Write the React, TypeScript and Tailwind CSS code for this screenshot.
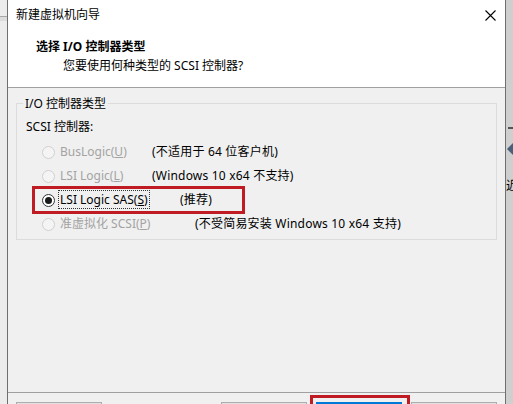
import React from 'react'

const uiFont = {
  fontFamily: '"Noto Sans", "Noto Sans CJK SC", sans-serif',
}

type Option = {
  label: string
  mnemonic: string
  note: string
  labelWidth: string
  disabled: boolean
  checked: boolean
}

const options: Option[] = [
  { label: 'BusLogic(', mnemonic: 'U', note: '(不适用于 64 位客户机)', labelWidth: 'w-[93px]', disabled: true, checked: false },
  { label: 'LSI Logic(', mnemonic: 'L', note: '(Windows 10 x64 不支持)', labelWidth: 'w-[93px]', disabled: true, checked: false },
  { label: 'LSI Logic SAS(', mnemonic: 'S', note: '(推荐)', labelWidth: 'w-[121px]', disabled: false, checked: true },
  { label: '准虚拟化 SCSI(', mnemonic: 'P', note: '(不受简易安装 Windows 10 x64 支持)', labelWidth: 'w-[136px]', disabled: true, checked: false },
]

function Radio({ checked, disabled }: { checked: boolean; disabled: boolean }) {
  return (
    <span
      className={`flex h-[13px] w-[13px] shrink-0 items-center justify-center rounded-full border ${
        disabled ? 'border-[#d0d0d0] bg-[#f4f4f4]' : 'border-[#333333] bg-white'
      }`}
    >
      {checked && <span className="h-[7px] w-[7px] rounded-full bg-[#1a1a1a]" />}
    </span>
  )
}

function OptionRow({ opt }: { opt: Option }) {
  return (
    <div className="flex h-[24px] items-center">
      <Radio checked={opt.checked} disabled={opt.disabled} />
      <span className={`ml-[4px] ${opt.labelWidth} shrink-0 whitespace-nowrap text-[12px]`}>
        <span
          className={`px-[1px] ${opt.disabled ? 'text-[#a3a3a3]' : 'text-black outline-1 outline-dotted outline-[#333]'}`}
        >
          {opt.label}
          <span className="underline">{opt.mnemonic}</span>)
        </span>
      </span>
      <span className="whitespace-nowrap text-[12px] tracking-[0.2px] text-black">{opt.note}</span>
    </div>
  )
}

export default function App() {
  return (
    <div className="relative flex h-[404px] w-[513px] overflow-hidden bg-[#e9e9e9]" style={uiFont}>
      {/* window behind, left side */}
      <div className="flex w-[7px] shrink-0 flex-col bg-[#ececec]">
        <div className="mt-[16px] h-[1px] bg-[#a8a8a8]" />
        <div className="h-[4px] bg-[#dcdcdc]" />
      </div>

      {/* wizard dialog */}
      <div className="flex w-[499px] shrink-0 flex-col border-x border-[#6f6f6f] bg-[#f0f0f0]">
        <div className="h-[87px] bg-white">
          <div className="flex h-[30px] items-center justify-between pl-[8px] pr-[9px]">
            <span className="text-[12px] text-black">新建虚拟机向导</span>
            <svg width="11" height="11" viewBox="0 0 11 11" className="text-black">
              <path d="M0.5 0.5 L10.5 10.5 M10.5 0.5 L0.5 10.5" stroke="currentColor" strokeWidth="1.1" />
            </svg>
          </div>
          <div className="pl-[28px] pt-[9px]">
            <div className="text-[12px] font-bold leading-[16px] text-black">选择 I/O 控制器类型</div>
            <div className="mt-[3px] pl-[27px] text-[12px] leading-[16px] text-black">
              您要使用何种类型的 SCSI 控制器?
            </div>
          </div>
        </div>
        <div className="h-[1px] bg-[#a0a0a0]" />

        <div className="flex-1 px-[8px] pt-[15px]">
          <div className="relative h-[137px] border border-[#dcdcdc] pl-[9px] pt-[15px]">
            <span className="absolute left-[6px] top-[-8px] bg-[#f0f0f0] px-[2px] text-[12px] leading-[16px] text-black">
              I/O 控制器类型
            </span>
            <div className="text-[12px] leading-[16px] text-black">SCSI 控制器:</div>
            <div className="mt-[5px] pl-[16px]">
              {options.map((o) => (
                <OptionRow key={o.label} opt={o} />
              ))}
            </div>
          </div>
        </div>

        <div className="h-[1px] bg-[#a0a0a0]" />
        <div className="flex h-[11px] pl-[8px] pt-[9px]">
          <div className="h-[20px] w-[86px] border border-[#adadad] bg-[#e1e1e1]" />
          <div className="ml-[119px] h-[20px] w-[86px] border border-[#adadad] bg-[#e1e1e1]" />
          <div className="ml-[9px] h-[20px] w-[86px] border-2 border-[#0078d7] bg-[#e1e1e1]" />
          <div className="ml-[9px] h-[20px] w-[86px] border border-[#adadad] bg-[#e1e1e1]" />
        </div>
      </div>

      {/* window behind, right side */}
      <div className="flex w-[7px] shrink-0 flex-col bg-[#cfcfcf]">
        <div className="mt-[127px] ml-[2px] h-[2px] bg-[#555]" />
        <svg width="7" height="12" viewBox="0 0 7 12" className="mt-[14px]">
          <path d="M7 0 L1 6 L7 12 Z" fill="#4a5f78" />
        </svg>
        <span className="mt-[24px] whitespace-nowrap text-[12px] leading-[14px] text-black">近</span>
      </div>

      {/* highlight marks */}
      <div className="pointer-events-none absolute left-[32px] top-[186px] h-[28px] w-[213px] border-[3px] border-[#c01a22]" />
      <div className="pointer-events-none absolute left-[310px] top-[395px] h-[20px] w-[100px] border-[3px] border-[#c01a22]" />
    </div>
  )
}
